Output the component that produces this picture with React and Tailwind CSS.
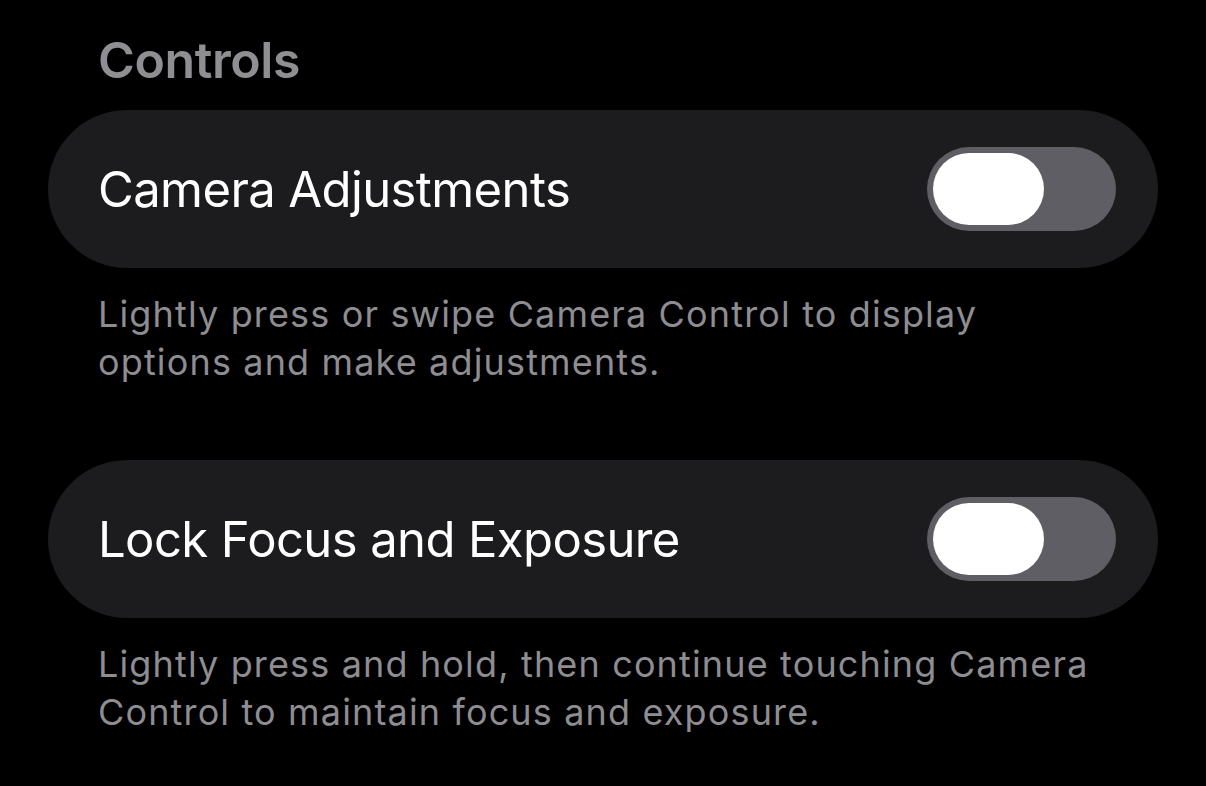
export default function App() {
  const Toggle = () => (
    <div className="w-[189px] h-[84px] rounded-full bg-[#5f5e64] flex items-center px-[6px] shrink-0">
      <div className="w-[111px] h-[72px] rounded-full bg-white" />
    </div>
  );
  const Row = ({ title }) => (
    <div className="h-[158px] rounded-[79px] bg-[#1c1c1e] flex items-center justify-between pl-[50px] pr-[42px]">
      <span className="text-[49px] text-white tracking-[-0.6px] pt-[2px]">{title}</span>
      <Toggle />
    </div>
  );
  return (
    <div className="w-[1206px] h-[786px] bg-black overflow-hidden" style={{ fontFamily: 'Inter, "Noto Sans", sans-serif' }}>
      <div className="pl-[48px] pr-[48px] pt-[30px]">
        <div className="pl-[50px] text-[50px] font-semibold text-[#8e8e93] leading-[60px] h-[80px] tracking-[-0.4px]">Controls</div>
        <Row title="Camera Adjustments" />
        <div className="pl-[50px] pt-[22px] text-[36px] leading-[48px] tracking-[1.15px] text-[#8d8d92] h-[192px]">
          Lightly press or swipe Camera Control to display<br />options and make adjustments.
        </div>
        <Row title="Lock Focus and Exposure" />
        <div className="pl-[50px] pt-[22px] text-[36px] leading-[48px] tracking-[1.15px] text-[#8d8d92]">
          Lightly press and hold, then continue touching Camera<br />Control to maintain focus and exposure.
        </div>
      </div>
    </div>
  );
}
